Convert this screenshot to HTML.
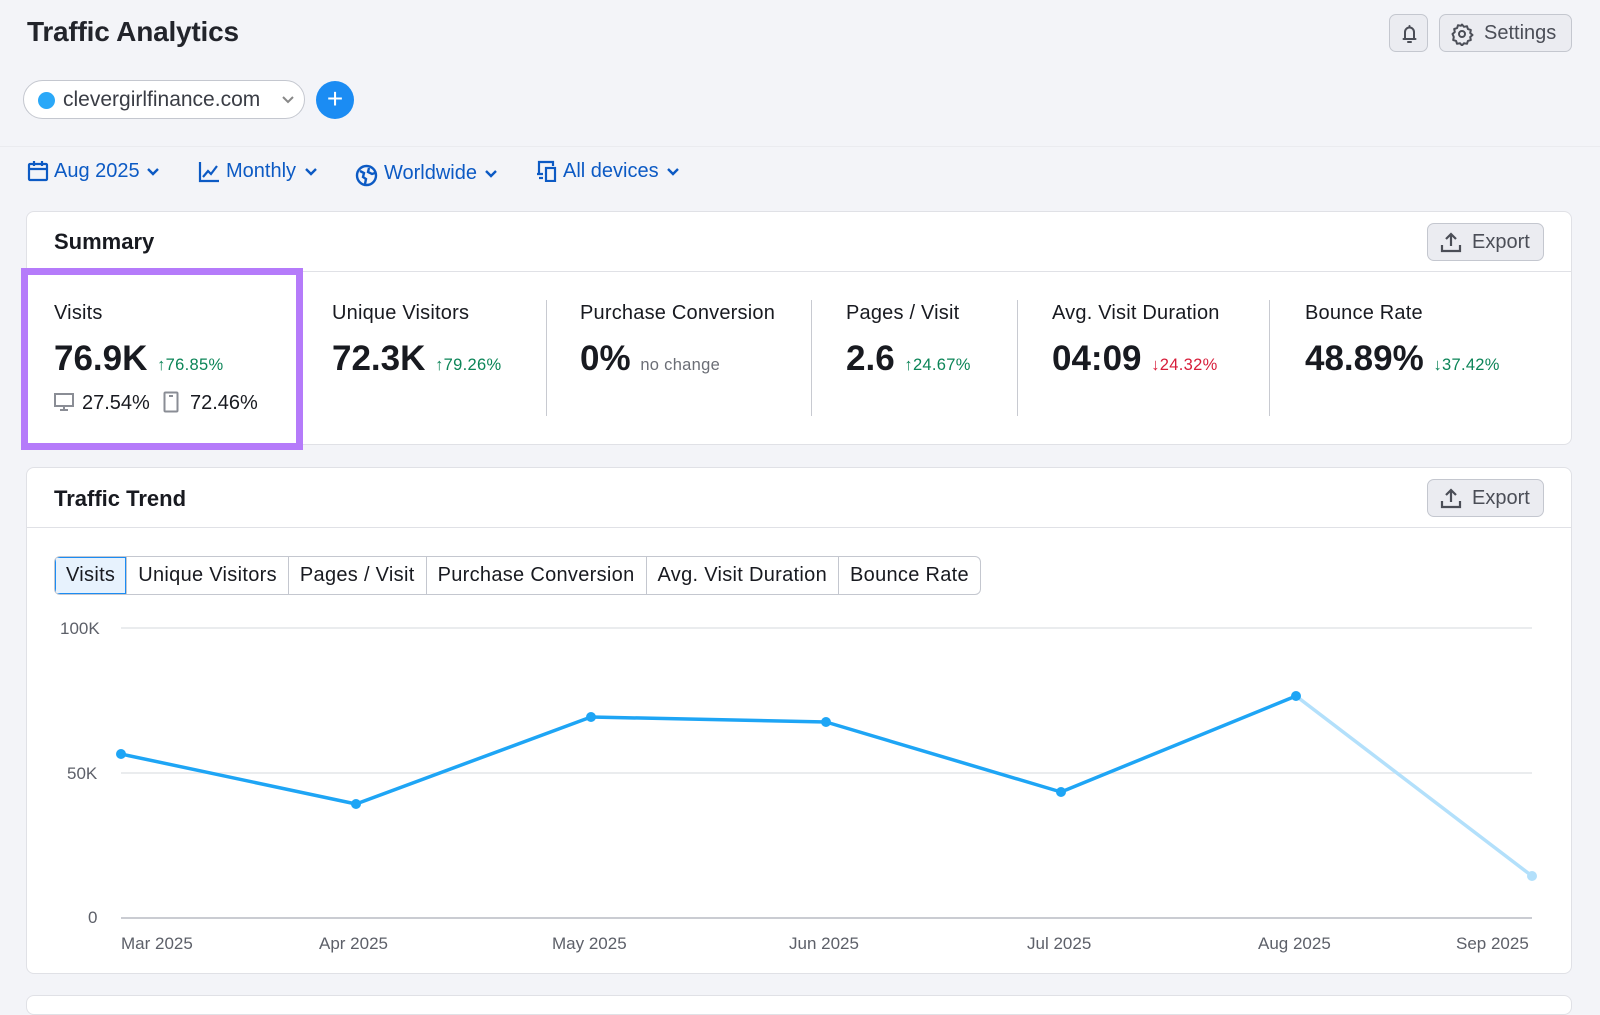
<!DOCTYPE html>
<html><head><meta charset="utf-8"><style>
*{box-sizing:border-box;margin:0;padding:0}
body{width:1600px;height:997px;background:#f3f4f8;font-family:"Liberation Sans",Arial,sans-serif;color:#181a20;position:relative;overflow:hidden}
.a{position:absolute}
.title{left:27px;top:16px;font-size:28px;font-weight:bold;letter-spacing:-0.2px;color:#22242b}
.btn{border:1px solid #c4c7cf;background:#ebecf1;border-radius:7px;color:#4b4e57}
.pill{left:23px;top:80px;width:282px;height:39px;border:1px solid #c4c7cf;border-radius:20px;background:#fff;font-size:21px;color:#3a3d45}
.plus{left:316px;top:81px;width:38px;height:38px;border-radius:50%;background:#1b8cf3;color:#fff;font-size:28px;text-align:center;line-height:36px}
.filt{font-size:20px;color:#0c5ac4;top:160px}
.card{background:#fff;border:1px solid #e0e1e6;border-radius:8px}
.h{font-size:22px;font-weight:bold}
.lab{font-size:20px;color:#181a20;top:302px;letter-spacing:0.2px}
.val{font-size:35px;font-weight:bold;top:339px}
.ch{font-size:16.5px;letter-spacing:0.3px}
.g{color:#0b8457}.r{color:#d71d3a}
.div{width:1px;background:#c8cad1;top:300px;height:116px}
.tabs{left:54px;top:556px;height:39px;display:flex;border:1px solid #c4c7cf;border-radius:6px;overflow:hidden;background:#fff}
.tabs div{font-size:20px;padding:0 11px;line-height:37px;border-left:1px solid #c4c7cf;letter-spacing:0.3px}
.tabs div:first-child{border-left:none;background:#e7f2fd;box-shadow:inset 0 0 0 1px #1b8cf3}
.ax{font-size:17px;color:#5d6069}
</style></head><body>
<div class="a title">Traffic Analytics</div>
<div class="a btn" style="left:1389px;top:14px;width:39px;height:38px"><svg width="39" height="38" viewBox="0 0 39 38"><path d="M13.5 24h12M15 24v-7a4.5 4.5 0 0 1 9 0v7M19.5 11v1.5M18 27h3" stroke="#4b4e57" stroke-width="2" fill="none" stroke-linecap="round"/></svg></div>
<div class="a btn" style="left:1439px;top:14px;width:133px;height:38px;font-size:20px;line-height:36px;padding-left:44px">Settings<svg class="a" style="left:10px;top:7px" width="24" height="24" viewBox="0 0 24 24"><circle cx="12" cy="12" r="3" stroke="#4b4e57" stroke-width="2" fill="none"/><path d="M12 2.5l2 2.3 3-.6.9 2.9 2.9.9-.6 3 2.3 2-2.3 2 .6 3-2.9.9-.9 2.9-3-.6-2 2.3-2-2.3-3 .6-.9-2.9-2.9-.9.6-3L2.5 12l2.3-2-.6-3 2.9-.9.9-2.9 3 .6z" stroke="#4b4e57" stroke-width="2" fill="none" stroke-linejoin="round"/></svg></div>
<div class="a pill"><span class="a" style="left:14px;top:11px;width:17px;height:17px;border-radius:50%;background:#2aa8f8"></span><span class="a" style="left:39px;top:7px">clevergirlfinance.com</span><svg class="a" style="left:257px;top:14px" width="14" height="10"><path d="M2 2l5 5 5-5" stroke="#888" stroke-width="2" fill="none"/></svg></div>
<div class="a plus">+</div>
<div class="a" style="left:0;top:146px;width:1600px;height:1px;background:#eaebef"></div>
<svg class="a" style="left:27px;top:160px" width="22" height="22" viewBox="0 0 22 22"><rect x="2" y="4" width="18" height="16" rx="1" stroke="#0c5ac4" stroke-width="2.2" fill="none"/><path d="M2 9h18M7 1v5M15 1v5" stroke="#0c5ac4" stroke-width="2.2"/></svg>
<div class="a filt" style="left:54px">Aug 2025</div>
<svg class="a" style="left:146px;top:167px" width="14" height="10"><path d="M2 2l5 5 5-5" stroke="#0c5ac4" stroke-width="2.4" fill="none"/></svg>
<svg class="a" style="left:198px;top:161px" width="22" height="22" viewBox="0 0 22 22"><path d="M2 1v19h19M5 16l5-6 3 3 6-8" stroke="#0c5ac4" stroke-width="2.2" fill="none"/></svg>
<div class="a filt" style="left:226px">Monthly</div>
<svg class="a" style="left:304px;top:167px" width="14" height="10"><path d="M2 2l5 5 5-5" stroke="#0c5ac4" stroke-width="2.4" fill="none"/></svg>
<svg class="a" style="left:355px;top:164px" width="23" height="23" viewBox="0 0 23 23"><circle cx="11.5" cy="11.5" r="9.5" stroke="#0c5ac4" stroke-width="2.4" fill="none"/><path d="M5 7l4 2-1 4 3 2-1 5M14 4l-1 4 4 2 3-1" stroke="#0c5ac4" stroke-width="2.4" fill="none"/></svg>
<div class="a filt" style="left:384px;top:162px">Worldwide</div>
<svg class="a" style="left:484px;top:169px" width="14" height="10"><path d="M2 2l5 5 5-5" stroke="#0c5ac4" stroke-width="2.4" fill="none"/></svg>
<svg class="a" style="left:535px;top:160px" width="24" height="22" viewBox="0 0 24 22"><path d="M4 14V2h14v4M2 14h6" stroke="#0c5ac4" stroke-width="2.2" fill="none"/><rect x="11" y="8" width="9" height="13" stroke="#0c5ac4" stroke-width="2.2" fill="none"/><path d="M4 18h4" stroke="#0c5ac4" stroke-width="2.2"/></svg>
<div class="a filt" style="left:563px">All devices</div>
<svg class="a" style="left:666px;top:167px" width="14" height="10"><path d="M2 2l5 5 5-5" stroke="#0c5ac4" stroke-width="2.4" fill="none"/></svg>

<div class="a card" style="left:26px;top:211px;width:1546px;height:234px"></div>
<div class="a h" style="left:54px;top:229px">Summary</div>
<div class="a" style="left:27px;top:271px;width:1544px;height:1px;background:#e0e1e6"></div>
<div class="a btn" style="left:1427px;top:223px;width:117px;height:38px;font-size:20px;line-height:36px;padding-left:44px">Export<svg class="a" style="left:12px;top:7px" width="22" height="22" viewBox="0 0 22 22"><path d="M11 15V3M6 8l5-5 5 5M2 14v6h18v-6" stroke="#4b4e57" stroke-width="2.2" fill="none"/></svg></div>
<div class="a" style="left:21px;top:268px;width:282px;height:182px;border:7px solid #b57bfa;background:#fff"></div>
<div class="a lab" style="left:54px">Visits</div>
<div class="a val" style="left:54px">76.9K <span class="ch g" style="font-weight:normal">↑76.85%</span></div>
<svg class="a" style="left:54px;top:392px" width="20" height="20" viewBox="0 0 20 20"><rect x="1" y="2" width="18" height="12" stroke="#8a8d95" stroke-width="2" fill="none"/><path d="M6 18h8M10 14v4" stroke="#8a8d95" stroke-width="2"/></svg>
<div class="a" style="left:82px;top:392px;font-size:20px">27.54%</div>
<svg class="a" style="left:163px;top:391px" width="16" height="22" viewBox="0 0 16 22"><rect x="1.5" y="1.5" width="13" height="19" rx="1" stroke="#8a8d95" stroke-width="2" fill="none"/><path d="M6 5h4" stroke="#8a8d95" stroke-width="2"/></svg>
<div class="a" style="left:190px;top:392px;font-size:20px">72.46%</div>
<div class="a lab" style="left:332px">Unique Visitors</div>
<div class="a val" style="left:332px">72.3K <span class="ch g" style="font-weight:normal">↑79.26%</span></div>
<div class="a div" style="left:546px"></div>
<div class="a lab" style="left:580px">Purchase Conversion</div>
<div class="a val" style="left:580px">0% <span class="ch" style="font-weight:normal;color:#6b6e76">no change</span></div>
<div class="a div" style="left:811px"></div>
<div class="a lab" style="left:846px">Pages / Visit</div>
<div class="a val" style="left:846px">2.6 <span class="ch g" style="font-weight:normal">↑24.67%</span></div>
<div class="a div" style="left:1017px"></div>
<div class="a lab" style="left:1052px">Avg. Visit Duration</div>
<div class="a val" style="left:1052px">04:09 <span class="ch r" style="font-weight:normal">↓24.32%</span></div>
<div class="a div" style="left:1269px"></div>
<div class="a lab" style="left:1305px">Bounce Rate</div>
<div class="a val" style="left:1305px">48.89% <span class="ch g" style="font-weight:normal">↓37.42%</span></div>

<div class="a card" style="left:26px;top:467px;width:1546px;height:507px"></div>
<div class="a h" style="left:54px;top:486px">Traffic Trend</div>
<div class="a" style="left:27px;top:527px;width:1544px;height:1px;background:#e0e1e6"></div>
<div class="a btn" style="left:1427px;top:479px;width:117px;height:38px;font-size:20px;line-height:36px;padding-left:44px">Export<svg class="a" style="left:12px;top:7px" width="22" height="22" viewBox="0 0 22 22"><path d="M11 15V3M6 8l5-5 5 5M2 14v6h18v-6" stroke="#4b4e57" stroke-width="2.2" fill="none"/></svg></div>
<div class="a tabs"><div>Visits</div><div>Unique Visitors</div><div>Pages / Visit</div><div>Purchase Conversion</div><div>Avg. Visit Duration</div><div>Bounce Rate</div></div>
<div class="a ax" style="left:60px;top:619px">100K</div>
<div class="a ax" style="left:67px;top:764px">50K</div>
<div class="a ax" style="left:88px;top:908px">0</div>
<svg class="a" style="left:0;top:0" width="1600" height="997">
<path d="M121 628H1532M121 773H1532" stroke="#e4e5e9" stroke-width="1.5"/>
<path d="M121 918H1532" stroke="#b9bcc3" stroke-width="1.5"/>
<polyline points="121,754 356,804 591,717 826,722 1061,792 1296,696" fill="none" stroke="#1ea5f5" stroke-width="3.5" stroke-linejoin="round"/>
<line x1="1296" y1="696" x2="1532" y2="876" stroke="#b3e0fb" stroke-width="3.5"/>
<g fill="#1ea5f5"><circle cx="121" cy="754" r="5"/><circle cx="356" cy="804" r="5"/><circle cx="591" cy="717" r="5"/><circle cx="826" cy="722" r="5"/><circle cx="1061" cy="792" r="5"/><circle cx="1296" cy="696" r="5"/></g>
<circle cx="1532" cy="876" r="5" fill="#b3e0fb"/>
</svg>
<div class="a ax" style="left:121px;top:934px">Mar 2025</div>
<div class="a ax" style="left:319px;top:934px">Apr 2025</div>
<div class="a ax" style="left:552px;top:934px">May 2025</div>
<div class="a ax" style="left:789px;top:934px">Jun 2025</div>
<div class="a ax" style="left:1027px;top:934px">Jul 2025</div>
<div class="a ax" style="left:1258px;top:934px">Aug 2025</div>
<div class="a ax" style="left:1456px;top:934px">Sep 2025</div>
<div class="a card" style="left:26px;top:995px;width:1546px;height:20px"></div>
</body></html>
